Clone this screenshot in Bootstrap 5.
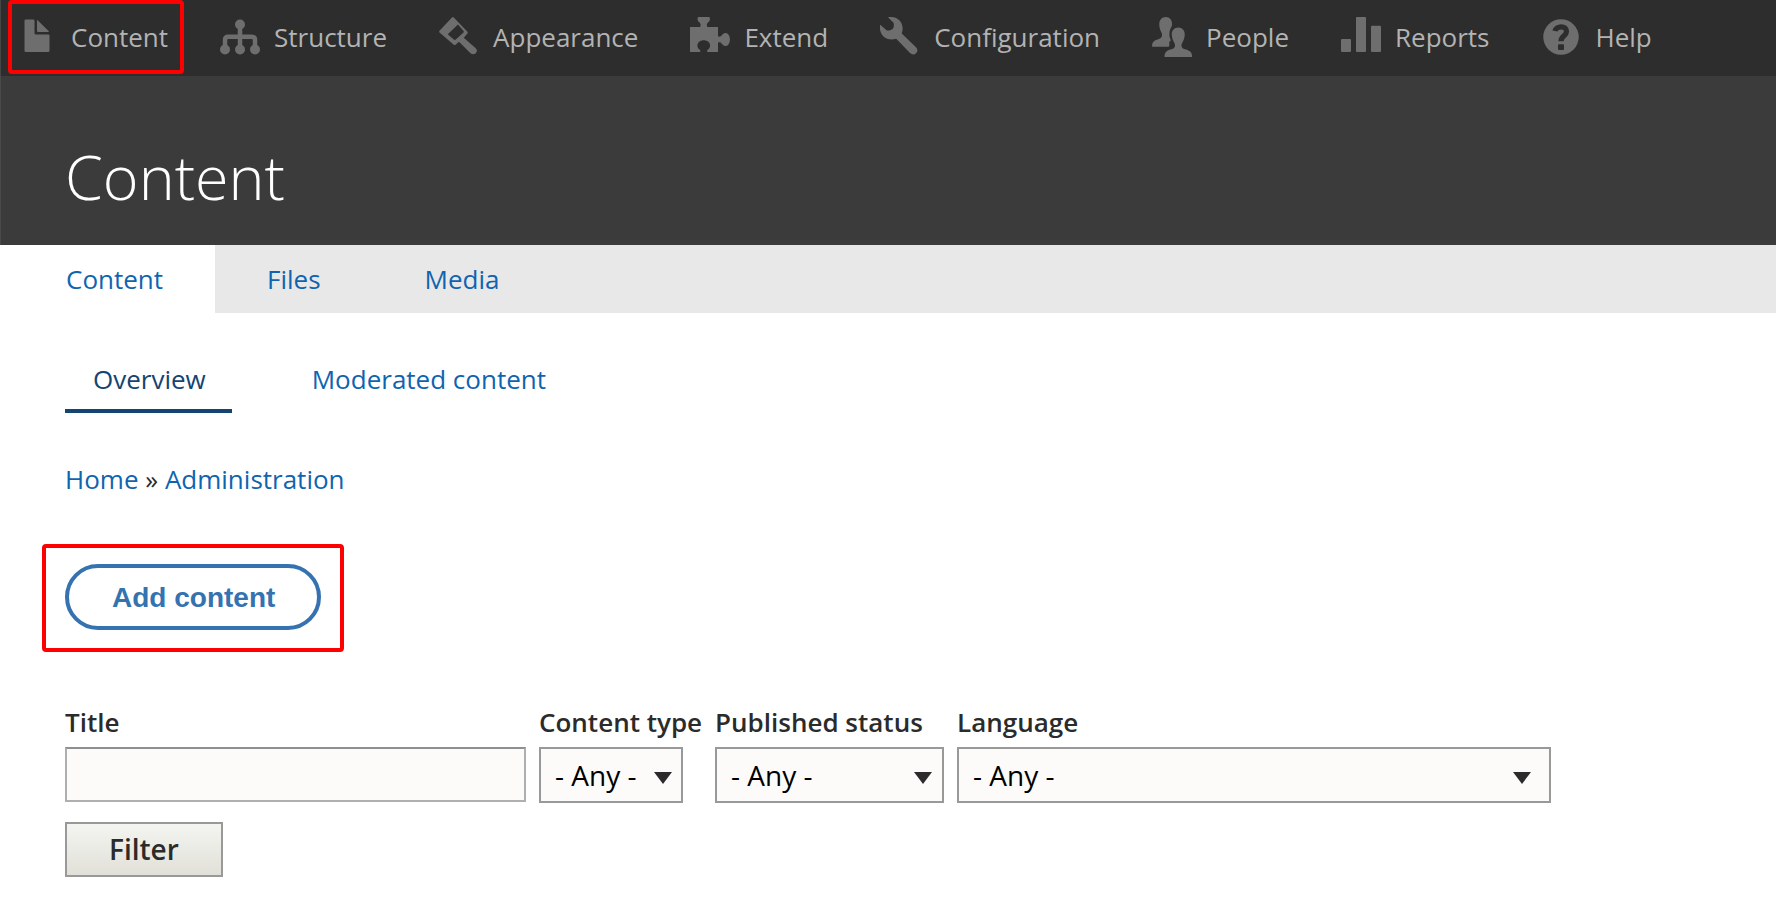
<!DOCTYPE html>
<html lang="en">
<head>
<meta charset="utf-8">
<meta name="viewport" content="width=device-width, initial-scale=1">
<title>Content</title>
<link href="https://cdn.jsdelivr.net/npm/bootstrap@5.3.0/dist/css/bootstrap.min.css" rel="stylesheet">
<style>
  :root { --admin-link: #0f64b0; --admin-dark: #144471; --admin-ink: #2b2b2b; --mark-red: #ff0000; }
  body { font-family: "Open Sans", sans-serif; font-size: 26px; line-height: 36px; color: var(--admin-ink); background: #fff; }
  a { color: var(--admin-link); text-decoration: none; }
  a:hover { text-decoration: underline; }

  .admin-bar { background: #2d2d2d; box-shadow: inset 1px 0 #454545; }
  .admin-bar .nav-link { height: 76px; padding: 0 35px 2px 17px; gap: 14px; color: #b3b3b3; }
  .admin-bar .nav-link:hover { color: #b3b3b3; text-decoration: none; }
  .admin-bar svg { width: 40px; height: 40px; flex: none; fill: #6e6e6e; }

  /* Red outline drawn over the highlighted control */
  .callout-box { position: absolute; border: 4px solid var(--mark-red); border-radius: 4px; pointer-events: none; }
  .callout-menu { inset: 0 19px 2px 8px; }
  .callout-action { inset: -20px -23px -22px -23px; }

  .page-head { background: #3b3b3b; box-shadow: inset 1px 0 #4a4a4a; padding: 59px 65px 26px; }
  .page-head h1 { font-size: 61px; line-height: 84px; font-weight: 300; color: #fff; }

  .primary-tabs { background: #e8e8e8; }
  .primary-tabs .nav-link { padding: 16px 52px; color: var(--admin-link); border-radius: 0; }
  .primary-tabs .nav-link.active { background: #fff; padding-left: 66px; }

  .page-body { padding: 46px 65px; }
  .secondary-tabs { gap: 54px; margin-bottom: 48px; }
  .secondary-tabs .nav-link { padding: 2px 26px 12px; color: var(--admin-link); border-bottom: 4px solid transparent; }
  .secondary-tabs .nav-link.active { padding-left: 28px; color: var(--admin-dark); border-color: var(--admin-dark); }

  .trail { margin-bottom: 67px; }
  .add-btn { font: bold 28px/34px "Liberation Sans", sans-serif; color: #3572b0; background: #fff; border: 4px solid #3572b0; border-radius: 33px; padding: 13px 42px 11px 43px; }
  .add-btn:hover { color: #fff; background: #3572b0; }

  .filters { gap: 13px; margin: 74px 0 19px; }
  .filters label { font-weight: 600; line-height: 36px; margin-bottom: 7px; }
  .field-box { display: block; max-width: 100%; font-size: 28px; line-height: 38px; color: #000; background-color: #fcfbfa; border: 2px solid #999; border-radius: 0; }
  .title-box { width: 461px; height: 55px; padding: 6px 12px; border-color: #8f8f8f #afafaf #afafaf; }
  .select-box { height: 56px; padding: 7px 32px 7px 14px; appearance: none; background-repeat: no-repeat; background-position: right 9px top 23px;
    background-image: url("data:image/svg+xml,%3Csvg xmlns='http://www.w3.org/2000/svg' width='18' height='12'%3E%3Cpath fill='%232b2b2b' d='M0 0h18L9 12z'/%3E%3C/svg%3E"); }
  .select-type { width: 144px; }
  .select-status { width: 229px; background-position: right 10px top 23px; }
  .select-lang { width: 594px; background-position: right 18px top 23px; }
  .filter-btn { font-size: 28px; line-height: 37px; font-weight: 600; color: var(--admin-ink); padding: 7px 42px; border: 2px solid #999; border-radius: 0; background: linear-gradient(#f4f5f1, #e1e0d8); }
</style>
</head>
<body>
<nav class="admin-bar" aria-label="Administration menu">
  <ul class="nav">
    <li class="nav-item position-relative"><a class="nav-link d-flex align-items-center" href="#">
      <svg viewBox="0 0 16 16" aria-hidden="true"><path d="M12.5 7h-5a.5.5 0 0 1-.5-.5v-5a.5.5 0 0 0-.5-.5h-3a.5.5 0 0 0-.5.5v12a.5.5 0 0 0 .5.5h9a.5.5 0 0 0 .5-.5v-6a.5.5 0 0 0-.5-.5zM8.500 6h4c.275 0 .34-.159.146-.354L8.354 1.354C8.159 1.159 8 1.225 8 1.500v4a.5.5 0 0 0 .5.5z"/></svg>
      Content</a><span class="callout-box callout-menu"></span></li>
    <li class="nav-item"><a class="nav-link d-flex align-items-center" href="#">
      <svg viewBox="0 0 16 16" aria-hidden="true"><circle cx="8" cy="3" r="2"/><circle cx="2" cy="13" r="2"/><circle cx="8" cy="13" r="2"/><circle cx="14" cy="13" r="2"/><path d="M8 3v10M2 12.500V9.200Q2 7.900 3.300 7.900H12.700Q14 7.900 14 9.200V12.500" fill="none" stroke="#6e6e6e" stroke-width="1.800"/></svg>
      Structure</a></li>
    <li class="nav-item"><a class="nav-link d-flex align-items-center" href="#">
      <svg viewBox="0 0 16 16" aria-hidden="true"><path fill-rule="evenodd" d="M5.800.100Q5.500-.1 5.200.200L.200 5.500Q-.1 5.900.200 6.200L5.900 11.100Q6.300 11.400 6.700 11L8 9.900 12.600 14.500Q13.600 15.300 14.600 14.600 15.700 13.600 14.700 12.500L9.900 8.300 11.400 6.600Q11.600 6.200 11.300 5.800ZM7.600 3 9.800 5.600Q10 5.900 9.800 6.200L6.700 9Q6.300 9.300 5.900 9L3.500 6.900Z"/></svg>
      Appearance</a></li>
    <li class="nav-item"><a class="nav-link d-flex align-items-center" href="#">
      <svg viewBox="0 0 16 16" aria-hidden="true"><path d="M3.300 0H7.700C8.200.5 8 1.500 7.400 2 6.600 2.600 6.700 3.200 6.900 4H11.200V7.700C11.800 8 12.300 7.900 12.800 7.200 13.400 6.300 14.600 6.100 15.300 6.900 16.200 8 16.200 10 15.300 11.100 14.600 11.900 13.400 11.700 12.800 10.800 12.300 10.100 11.800 10 11.200 10.300V14H7C6.700 13.700 6.800 13.300 7.200 13 8.300 12.200 8.300 10.700 7.300 9.900 6.300 9.100 4.700 9.100 3.700 9.900 2.700 10.700 2.700 12.200 3.800 13 4.200 13.300 4.300 13.700 4 14H0V4H4.100C4.300 3.200 4.400 2.600 3.600 2 3 1.500 2.800.5 3.300 0Z"/></svg>
      Extend</a></li>
    <li class="nav-item"><a class="nav-link d-flex align-items-center" href="#">
      <svg viewBox="0 0 16 16" aria-hidden="true"><path d="M14.400 12.100 8.700 6.600C9.400 4.600 9.100 2.600 7.600 1.200 6.400.1 4.700-.2 3.200.100L5.300 2.200C5.700 2.700 5.600 4.200 5.100 4.700 4.500 5.300 3 5.700 2.500 5.200L.1 3.100C-.3 4.700.1 6.400 1.300 7.700 2.700 9.100 4.800 9.300 6.500 8.700L12 14.400C12.700 15.100 13.700 15.200 14.400 14.500 15.200 13.800 15.100 12.800 14.400 12.100Z"/></svg>
      Configuration</a></li>
    <li class="nav-item"><a class="nav-link d-flex align-items-center" href="#">
      <svg viewBox="0 0 16 16" aria-hidden="true"><path d="M6.700 11.900H.1C-.2 10.200.9 9.300 2.300 9 3.500 8.700 4.300 8 3.900 6.500 3.300 5.300 2.900 4.300 2.900 2.900 2.900 1.100 4 0 5.500 0S8 1.100 8 2.700C8 3.300 8 3.600 7.700 4.100 6.900 5.300 6.700 7.500 7.300 8.700 7.700 9.500 7.300 9.600 7 9.900 6.600 10.200 7.300 10.800 6.700 11.900Z"/><path d="M5 16C4.900 14 6.200 13.300 7.400 13 8.800 12.700 9.500 12 9.100 10.700 8.300 9.300 7.900 8.200 7.900 6.900 7.900 5.300 9 4.200 10.500 4.200S13.100 5.300 13.100 6.900C13.100 8.200 12.700 9.300 11.900 10.700 11.500 12 12.200 12.700 13.600 13 14.800 13.300 16.200 14 16 16Z"/></svg>
      People</a></li>
    <li class="nav-item"><a class="nav-link d-flex align-items-center" href="#">
      <svg viewBox="0 0 16 16" aria-hidden="true"><rect y="8.800" width="4" height="5.200" rx=".4"/><rect x="6" width="4" height="14" rx=".4"/><rect x="12" y="3.500" width="4" height="10.500" rx=".4"/></svg>
      Reports</a></li>
    <li class="nav-item"><a class="nav-link d-flex align-items-center" href="#">
      <svg viewBox="0 0 16 16" aria-hidden="true"><circle cx="8" cy="8" r="7.100"/><path d="M5.600 5.600C6 3.500 10.200 3.200 10.200 5.800 10.200 7.500 8 7.500 8 9.700" fill="none" stroke="#2d2d2d" stroke-width="2.100"/><rect x="6.800" y="10.900" width="2.400" height="2.300" rx=".4" fill="#2d2d2d"/></svg>
      Help</a></li>
  </ul>
</nav>

<header class="page-head"><h1 class="m-0">Content</h1></header>

<nav class="primary-tabs" aria-label="Primary tabs">
  <ul class="nav">
    <li class="nav-item"><a class="nav-link active" aria-current="page" href="#">Content</a></li>
    <li class="nav-item"><a class="nav-link" href="#">Files</a></li>
    <li class="nav-item"><a class="nav-link" href="#">Media</a></li>
  </ul>
</nav>

<main class="page-body">
  <nav aria-label="Secondary tabs">
    <ul class="nav secondary-tabs">
      <li class="nav-item"><a class="nav-link active" aria-current="page" href="#">Overview</a></li>
      <li class="nav-item"><a class="nav-link" href="#">Moderated content</a></li>
    </ul>
  </nav>
  <nav class="trail" aria-label="Breadcrumb"><a href="#">Home</a> » <a href="#">Administration</a></nav>

  <div class="d-flex">
    <div class="position-relative">
      <button type="button" class="add-btn btn d-block">Add content</button>
      <span class="callout-box callout-action"></span>
    </div>
  </div>

  <form>
    <div class="filters d-flex flex-wrap align-items-start">
      <div><label class="d-block" for="f-title">Title</label><input class="field-box title-box" type="text" id="f-title"></div>
      <div><label class="d-block" for="f-type">Content type</label><select class="field-box select-box select-type" id="f-type"><option>- Any -</option></select></div>
      <div><label class="d-block" for="f-status">Published status</label><select class="field-box select-box select-status" id="f-status"><option>- Any -</option></select></div>
      <div><label class="d-block" for="f-lang">Language</label><select class="field-box select-box select-lang" id="f-lang"><option>- Any -</option></select></div>
    </div>
    <button type="submit" class="btn filter-btn">Filter</button>
  </form>
</main>
<script src="https://cdn.jsdelivr.net/npm/bootstrap@5.3.0/dist/js/bootstrap.bundle.min.js"></script>
</body>
</html>
